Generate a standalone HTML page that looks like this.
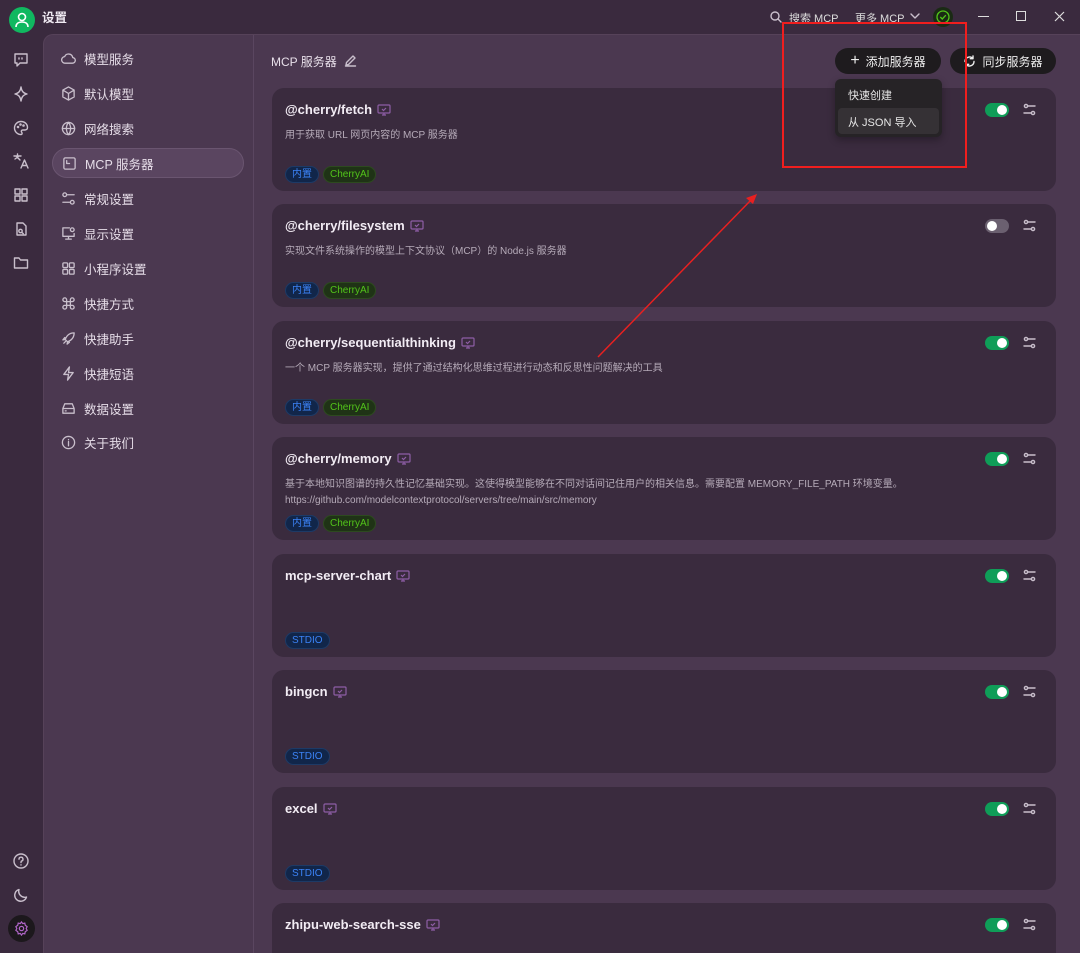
<!DOCTYPE html>
<html style="width:1080px;height:953px;overflow:hidden"><head><meta charset="utf-8"><style>
*{box-sizing:border-box;margin:0;padding:0}
body{width:1080px;height:953px;overflow:hidden;background:#3a2a3e;font-family:"Liberation Sans","Noto Sans CJK SC",sans-serif;color:#e8e0ea;position:relative}
.abs{position:absolute}
svg.i{fill:none;stroke:#c9bfcc;stroke-width:1.4;stroke-linecap:round;stroke-linejoin:round}
.panel{left:43px;top:34px;width:1037px;height:919px;background:#4b3850;border-top-left-radius:10px;border-top:1px solid #564259;border-left:1px solid #564259}
.divider{left:253px;top:35px;width:1px;height:918px;background:#5a4660}
.nav{left:52px;width:192px;height:30px;display:flex;align-items:center;padding-left:9px;font-size:12.5px;color:#e6dde8}
.nav svg{width:15px;height:15px;margin-right:8px}
.nav.act{background:#5a4560;border:1px solid #6a5570;border-radius:15px}
.card{left:272px;width:784px;height:103px;background:#3a2b3e;border-radius:12px}
.card .t{position:absolute;left:13px;top:14px;font-size:13px;font-weight:bold;color:#f2ecf4;display:flex;align-items:center}
.card .t svg{margin-left:5px}
.card .d{position:absolute;left:13px;top:40px;font-size:10px;color:#b6abb9;line-height:16px}
.tags{position:absolute;left:13px;top:78px;display:flex;gap:4px}
.tag{font-size:10px;height:17px;line-height:15px;padding:0 6px;border-radius:9px}
.nz{background:#11264a;color:#3b82f6;border:1px solid #1d3a66}
.ch{background:#1f3316;color:#52c41a;border:1px solid #2d4a1f}
.tg{position:absolute;left:713px;top:15px;width:24px;height:14px;border-radius:7px;background:#0f9d58}
.tg::after{content:"";position:absolute;right:2px;top:2px;width:10px;height:10px;border-radius:50%;background:#fff}
.tg.off{background:#6b6070}.tg.off::after{right:auto;left:2px}
.st{position:absolute;left:751px;top:15px}
.btn{top:48px;height:26px;background:#1e1b1e;border-radius:13px;font-size:12px;color:#eee;display:flex;align-items:center;justify-content:center;gap:6px}
</style></head><body>
<div class="abs" style="left:9px;top:7px;width:26px;height:26px;border-radius:50%;background:#10b860"></div>
<svg class="abs" style="left:14px;top:11px" width="16" height="17" viewBox="0 0 16 17" fill="none" stroke="#fff" stroke-width="1.6"><circle cx="8" cy="6" r="3.5"/><path d="M2 16c0-3.5 2.7-5 6-5s6 1.5 6 5"/></svg>
<div class="abs" style="left:42px;top:7px;font-size:12.5px;font-weight:bold;color:#f0eaf2">设置</div>
<svg class="abs i" style="left:770px;top:11px" width="12" height="12" viewBox="0 0 12 12"><circle cx="5" cy="5" r="4"/><path d="M8 8l3 3"/></svg>
<div class="abs" style="left:789px;top:10px;font-size:11px;color:#ddd">搜索 MCP</div>
<div class="abs" style="left:855px;top:10px;font-size:11px;color:#ddd">更多 MCP</div>
<svg class="abs i" style="left:910px;top:13px" width="10" height="7" viewBox="0 0 10 7"><path d="M1 1l4 4 4-4"/></svg>
<div class="abs" style="left:933px;top:7px;width:20px;height:20px;border-radius:50%;background:#1a2a14"></div>
<svg class="abs" style="left:936px;top:10px" width="14" height="14" viewBox="0 0 14 14" fill="none" stroke="#52c41a" stroke-width="1.3"><circle cx="7" cy="7" r="6"/><path d="M4.3 7l2 2 3.5-3.8"/></svg>
<div class="abs" style="left:978px;top:16px;width:11px;height:1px;background:#ddd"></div>
<div class="abs" style="left:1016px;top:11px;width:10px;height:10px;border:1.3px solid #ddd"></div>
<svg class="abs" style="left:1054px;top:11px" width="11" height="11" viewBox="0 0 11 11" stroke="#ddd" stroke-width="1.2"><path d="M1 1l9 9M10 1l-9 9"/></svg>
<svg class="abs i" style="left:13px;top:52px" width="16" height="16" viewBox="0 0 16 16"><path d="M2 2h12v9H7l-3 3v-3H2z"/><path d="M6 6v1M9 6v1"/></svg>
<svg class="abs i" style="left:13px;top:86px" width="16" height="16" viewBox="0 0 16 16"><path d="M8 1c.6 4 2 6 6 7-4 1-5.4 3-6 7-.6-4-2-6-6-7 4-1 5.4-3 6-7z"/></svg>
<svg class="abs i" style="left:13px;top:120px" width="16" height="16" viewBox="0 0 16 16"><path d="M8 1.5a6.5 6.5 0 1 0 0 13c1.5 0 1.2-1.6.6-2.4-.7-1 0-2.1 1.2-2.1H12c1.5 0 2.5-1 2.5-2.5C14.5 4 11.6 1.5 8 1.5z"/><circle cx="5" cy="7" r=".6"/><circle cx="7.5" cy="4.5" r=".6"/><circle cx="10.5" cy="5.5" r=".6"/></svg>
<svg class="abs i" style="left:13px;top:153px" width="16" height="16" viewBox="0 0 16 16"><path d="M1 3h7M4.5 1v2M2 6l4-3M7 7L3 3"/><path d="M8 15l3.5-8 3.5 8M9.2 12.5h4.6"/></svg>
<svg class="abs i" style="left:13px;top:187px" width="16" height="16" viewBox="0 0 16 16"><rect x="2" y="2" width="5" height="5"/><rect x="9" y="2" width="5" height="5"/><rect x="2" y="9" width="5" height="5"/><rect x="9" y="9" width="5" height="5"/></svg>
<svg class="abs i" style="left:13px;top:221px" width="16" height="16" viewBox="0 0 16 16"><path d="M4 2h6l3 3v9H4z"/><circle cx="7.5" cy="10" r="1.7"/><path d="M9 11.5l1.3 1.3"/></svg>
<svg class="abs i" style="left:13px;top:255px" width="16" height="16" viewBox="0 0 16 16"><path d="M1.5 3h4.5l1.5 2h7v8h-13z"/></svg>
<svg class="abs i" style="left:13px;top:853px" width="16" height="16" viewBox="0 0 16 16"><circle cx="8" cy="8" r="7"/><path d="M6 6.2a2 2 0 1 1 2.6 1.9C8 8.3 8 8.8 8 9.6M8 11.8v.2"/></svg>
<svg class="abs i" style="left:13px;top:887px" width="16" height="16" viewBox="0 0 16 16"><path d="M13.5 10A6 6 0 0 1 6 2.5a6 6 0 1 0 7.5 7.5z"/></svg>
<div class="abs" style="left:8px;top:915px;width:27px;height:27px;border-radius:50%;background:#1c181c"></div>
<svg class="abs" style="left:14px;top:921px" width="15" height="15" viewBox="0 0 16 16" fill="none" stroke="#b066c8" stroke-width="1.3"><circle cx="8" cy="8" r="2.3"/><path d="M8 1l1.3 1.8 2.2-.5.5 2.2L14 6l-1 2 1 2-2 1.5-.5 2.2-2.2-.5L8 15l-1.3-1.8-2.2.5-.5-2.2L2 10l1-2-1-2 2-1.5.5-2.2 2.2.5z"/></svg>
<div class="abs panel"></div>
<div class="abs divider"></div>
<div class="abs nav" style="top:43px"><svg class="i" viewBox="0 0 16 16"><path d="M4.5 13h7.5a3 3 0 0 0 .5-6 4.5 4.5 0 0 0-8.6-1A3.5 3.5 0 0 0 4.5 13z"/></svg>模型服务</div>
<div class="abs nav" style="top:78px"><svg class="i" viewBox="0 0 16 16"><path d="M8 1l6 3.3v7.4L8 15l-6-3.3V4.3zM2 4.3L8 8l6-3.7M8 8v7"/></svg>默认模型</div>
<div class="abs nav" style="top:113px"><svg class="i" viewBox="0 0 16 16"><circle cx="8" cy="8" r="6.5"/><path d="M1.5 8h13M8 1.5c-3 3.5-3 9.5 0 13M8 1.5c3 3.5 3 9.5 0 13"/></svg>网络搜索</div>
<div class="abs nav act" style="top:148px"><svg class="i" viewBox="0 0 16 16"><rect x="2" y="2" width="12" height="12" rx="1.5"/><path d="M5 5v3h3"/></svg>MCP 服务器</div>
<div class="abs nav" style="top:183px"><svg class="i" viewBox="0 0 16 16"><path d="M7 4h7M2 12h7"/><circle cx="4" cy="4" r="2"/><circle cx="12" cy="12" r="2"/></svg>常规设置</div>
<div class="abs nav" style="top:218px"><svg class="i" viewBox="0 0 16 16"><path d="M9 2H2v9h12V8M5 14h6M8 11v3"/><circle cx="12" cy="4" r="2"/></svg>显示设置</div>
<div class="abs nav" style="top:253px"><svg class="i" viewBox="0 0 16 16"><rect x="2" y="2" width="5" height="5" rx="1"/><rect x="9" y="2" width="5" height="5" rx="1"/><rect x="2" y="9" width="5" height="5" rx="1"/><rect x="9" y="9" width="5" height="5" rx="1"/></svg>小程序设置</div>
<div class="abs nav" style="top:288px"><svg class="i" viewBox="0 0 16 16"><path d="M6 6h4v4H6zM6 6V4a2 2 0 1 0-2 2h2M10 6V4a2 2 0 1 1 2 2h-2M6 10v2a2 2 0 1 1-2-2h2M10 10v2a2 2 0 1 0 2-2h-2"/></svg>快捷方式</div>
<div class="abs nav" style="top:323px"><svg class="i" viewBox="0 0 16 16"><path d="M14 2c-5 0-8 3-9.5 7l2.5 2.5C11 10 14 7 14 2zM4.5 9L2 9.5 4 7M7 11.5L6.5 14 9 12M3 13l2-2"/></svg>快捷助手</div>
<div class="abs nav" style="top:358px"><svg class="i" viewBox="0 0 16 16"><path d="M9 1L3 9h5l-1 6 6-8H8z"/></svg>快捷短语</div>
<div class="abs nav" style="top:393px"><svg class="i" viewBox="0 0 16 16"><path d="M2 8l2-5h8l2 5v5H2zM2 8h12M4.5 10.5h1"/></svg>数据设置</div>
<div class="abs nav" style="top:427px"><svg class="i" viewBox="0 0 16 16"><circle cx="8" cy="8" r="6.5"/><path d="M8 7v4.5M8 4.8v.2"/></svg>关于我们</div>
<div class="abs" style="left:271px;top:53px;font-size:12px;color:#e8e0ea">MCP 服务器</div>
<svg class="abs i" style="left:344px;top:54px" width="13" height="13" viewBox="0 0 13 13"><path d="M2 11l.5-2.5L9 2l2 2-6.5 6.5zM1.5 12h10"/></svg>
<div class="abs btn" style="left:835px;width:106px"><span style="font-size:16px;font-weight:300">+</span>添加服务器</div>
<div class="abs btn" style="left:950px;width:106px"><svg class="i" width="13" height="13" viewBox="0 0 13 13" style="stroke:#eee"><path d="M11 6.5A4.5 4.5 0 0 1 3 9.3M2 6.5A4.5 4.5 0 0 1 10 3.7M10 1v2.7H7.3M3 12V9.3h2.7"/></svg>同步服务器</div>
<div class="abs card" style="top:88px"><div class="t">@cherry/fetch<svg width="14" height="12" viewBox="0 0 14 12" fill="none" stroke="#8e5ea6" stroke-width="1.2"><rect x="1" y="1" width="12" height="8" rx="1"/><path d="M5 11h4M7 9v2M5 5l1.5 1.5L9 4"/></svg></div><div class="d">用于获取 URL 网页内容的 MCP 服务器</div><div class="tags"><span class="tag nz">内置</span><span class="tag ch">CherryAI</span></div><div class="tg"></div><svg class="st i" width="13" height="13" viewBox="0 0 13 13"><path d="M5 3h7M1 10h7"/><circle cx="3" cy="3" r="1.6"/><circle cx="10" cy="10" r="1.6"/></svg></div>
<div class="abs card" style="top:204px"><div class="t">@cherry/filesystem<svg width="14" height="12" viewBox="0 0 14 12" fill="none" stroke="#8e5ea6" stroke-width="1.2"><rect x="1" y="1" width="12" height="8" rx="1"/><path d="M5 11h4M7 9v2M5 5l1.5 1.5L9 4"/></svg></div><div class="d">实现文件系统操作的模型上下文协议（MCP）的 Node.js 服务器</div><div class="tags"><span class="tag nz">内置</span><span class="tag ch">CherryAI</span></div><div class="tg off"></div><svg class="st i" width="13" height="13" viewBox="0 0 13 13"><path d="M5 3h7M1 10h7"/><circle cx="3" cy="3" r="1.6"/><circle cx="10" cy="10" r="1.6"/></svg></div>
<div class="abs card" style="top:321px"><div class="t">@cherry/sequentialthinking<svg width="14" height="12" viewBox="0 0 14 12" fill="none" stroke="#8e5ea6" stroke-width="1.2"><rect x="1" y="1" width="12" height="8" rx="1"/><path d="M5 11h4M7 9v2M5 5l1.5 1.5L9 4"/></svg></div><div class="d">一个 MCP 服务器实现，提供了通过结构化思维过程进行动态和反思性问题解决的工具</div><div class="tags"><span class="tag nz">内置</span><span class="tag ch">CherryAI</span></div><div class="tg"></div><svg class="st i" width="13" height="13" viewBox="0 0 13 13"><path d="M5 3h7M1 10h7"/><circle cx="3" cy="3" r="1.6"/><circle cx="10" cy="10" r="1.6"/></svg></div>
<div class="abs card" style="top:437px"><div class="t">@cherry/memory<svg width="14" height="12" viewBox="0 0 14 12" fill="none" stroke="#8e5ea6" stroke-width="1.2"><rect x="1" y="1" width="12" height="8" rx="1"/><path d="M5 11h4M7 9v2M5 5l1.5 1.5L9 4"/></svg></div><div class="d">基于本地知识图谱的持久性记忆基础实现。这使得模型能够在不同对话间记住用户的相关信息。需要配置 MEMORY_FILE_PATH 环境变量。<br>https://github.com/modelcontextprotocol/servers/tree/main/src/memory</div><div class="tags"><span class="tag nz">内置</span><span class="tag ch">CherryAI</span></div><div class="tg"></div><svg class="st i" width="13" height="13" viewBox="0 0 13 13"><path d="M5 3h7M1 10h7"/><circle cx="3" cy="3" r="1.6"/><circle cx="10" cy="10" r="1.6"/></svg></div>
<div class="abs card" style="top:554px"><div class="t">mcp-server-chart<svg width="14" height="12" viewBox="0 0 14 12" fill="none" stroke="#8e5ea6" stroke-width="1.2"><rect x="1" y="1" width="12" height="8" rx="1"/><path d="M5 11h4M7 9v2M5 5l1.5 1.5L9 4"/></svg></div><div class="tags"><span class="tag nz">STDIO</span></div><div class="tg"></div><svg class="st i" width="13" height="13" viewBox="0 0 13 13"><path d="M5 3h7M1 10h7"/><circle cx="3" cy="3" r="1.6"/><circle cx="10" cy="10" r="1.6"/></svg></div>
<div class="abs card" style="top:670px"><div class="t">bingcn<svg width="14" height="12" viewBox="0 0 14 12" fill="none" stroke="#8e5ea6" stroke-width="1.2"><rect x="1" y="1" width="12" height="8" rx="1"/><path d="M5 11h4M7 9v2M5 5l1.5 1.5L9 4"/></svg></div><div class="tags"><span class="tag nz">STDIO</span></div><div class="tg"></div><svg class="st i" width="13" height="13" viewBox="0 0 13 13"><path d="M5 3h7M1 10h7"/><circle cx="3" cy="3" r="1.6"/><circle cx="10" cy="10" r="1.6"/></svg></div>
<div class="abs card" style="top:787px"><div class="t">excel<svg width="14" height="12" viewBox="0 0 14 12" fill="none" stroke="#8e5ea6" stroke-width="1.2"><rect x="1" y="1" width="12" height="8" rx="1"/><path d="M5 11h4M7 9v2M5 5l1.5 1.5L9 4"/></svg></div><div class="tags"><span class="tag nz">STDIO</span></div><div class="tg"></div><svg class="st i" width="13" height="13" viewBox="0 0 13 13"><path d="M5 3h7M1 10h7"/><circle cx="3" cy="3" r="1.6"/><circle cx="10" cy="10" r="1.6"/></svg></div>
<div class="abs card" style="top:903px;height:50px;border-bottom-left-radius:0;border-bottom-right-radius:0"><div class="t">zhipu-web-search-sse<svg width="14" height="12" viewBox="0 0 14 12" fill="none" stroke="#8e5ea6" stroke-width="1.2"><rect x="1" y="1" width="12" height="8" rx="1"/><path d="M5 11h4M7 9v2M5 5l1.5 1.5L9 4"/></svg></div><div class="tg"></div><svg class="st i" width="13" height="13" viewBox="0 0 13 13"><path d="M5 3h7M1 10h7"/><circle cx="3" cy="3" r="1.6"/><circle cx="10" cy="10" r="1.6"/></svg></div>
<div class="abs" style="left:835px;top:79px;width:107px;height:58px;background:#262326;border-radius:6px;box-shadow:0 3px 8px rgba(0,0,0,.3)"></div>
<div class="abs" style="left:848px;top:87px;font-size:11px;color:#e6e6e6">快速创建</div>
<div class="abs" style="left:838px;top:108px;width:101px;height:26px;background:#353135;border-radius:4px"></div>
<div class="abs" style="left:848px;top:114px;font-size:11px;color:#e6e6e6">从 JSON 导入</div>
<div class="abs" style="left:782px;top:22px;width:185px;height:146px;border:2px solid #f01e1e"></div>
<svg class="abs" style="left:0;top:0" width="1080" height="953"><path d="M598 357L752 199" stroke="#e82020" stroke-width="1.5"/><path d="M757 194l-11 4 7 6z" fill="#e82020"/></svg>
</body></html>
